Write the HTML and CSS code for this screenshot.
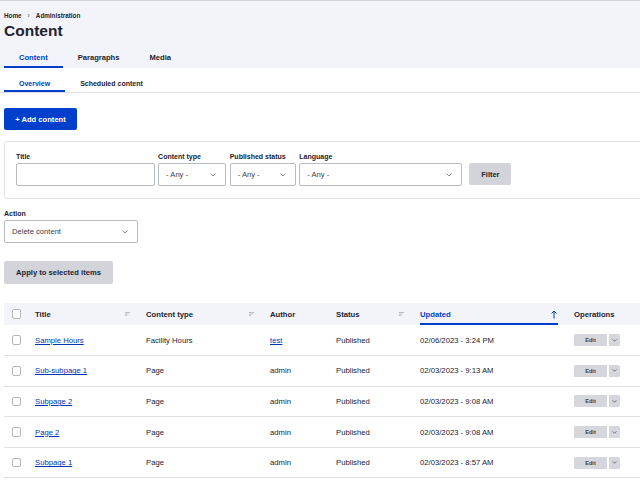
FILE: index.html
```html
<!DOCTYPE html>
<html lang="en">
<head>
<meta charset="utf-8">
<title>Content</title>
<link rel="stylesheet" href="styles.css">
</head>
<body>
<header class="page-header">
  <nav class="breadcrumb"><span>Home</span><span class="sep">›</span><span>Administration</span></nav>
  <h1 class="page-title">Content</h1>
  <ul class="tabs tabs-primary">
    <li class="tab active">Content</li>
    <li class="tab">Paragraphs</li>
    <li class="tab">Media</li>
  </ul>
</header>
<div class="subtabs">
  <ul class="tabs tabs-secondary">
    <li class="tab active">Overview</li>
    <li class="tab">Scheduled content</li>
  </ul>
</div>
<main class="content">
  <a class="btn btn-primary" href="#">+ Add content</a>

  <div class="filters">
    <div class="field f-title">
      <label>Title</label>
      <div class="input"></div>
    </div>
    <div class="field f-type">
      <label>Content type</label>
      <div class="input select"><span>- Any -</span><svg class="chev" viewBox="0 0 6 4" width="6" height="4"><polyline points="0.5,0.5 3,3 5.5,0.5"/></svg></div>
    </div>
    <div class="field f-status">
      <label>Published status</label>
      <div class="input select"><span>- Any -</span><svg class="chev" viewBox="0 0 6 4" width="6" height="4"><polyline points="0.5,0.5 3,3 5.5,0.5"/></svg></div>
    </div>
    <div class="field f-lang">
      <label>Language</label>
      <div class="input select"><span>- Any -</span><svg class="chev" viewBox="0 0 6 4" width="6" height="4"><polyline points="0.5,0.5 3,3 5.5,0.5"/></svg></div>
    </div>
    <button class="btn btn-filter">Filter</button>
  </div>

  <div class="field f-action">
    <label>Action</label>
    <div class="input select"><span>Delete content</span><svg class="chev" viewBox="0 0 6 4" width="6" height="4"><polyline points="0.5,0.5 3,3 5.5,0.5"/></svg></div>
  </div>

  <button class="btn btn-apply">Apply to selected items</button>

  <table class="views-table">
    <colgroup>
      <col class="c-chk"><col class="c-title"><col class="c-type"><col class="c-author"><col class="c-status"><col class="c-updated"><col class="c-ops">
    </colgroup>
    <thead>
      <tr>
        <th><div class="th-inner"><span class="cb"></span></div></th>
        <th><div class="th-inner"><span>Title</span><svg class="sort" viewBox="0 0 5 4" width="5" height="4"><path d="M0 0.5h5M0 2h3.6M0 3.5h2"/></svg></div></th>
        <th><div class="th-inner"><span>Content type</span><svg class="sort" viewBox="0 0 5 4" width="5" height="4"><path d="M0 0.5h5M0 2h3.6M0 3.5h2"/></svg></div></th>
        <th><div class="th-inner"><span>Author</span></div></th>
        <th><div class="th-inner"><span>Status</span><svg class="sort" viewBox="0 0 5 4" width="5" height="4"><path d="M0 0.5h5M0 2h3.6M0 3.5h2"/></svg></div></th>
        <th class="active"><div class="th-inner"><span>Updated</span><svg class="arrow" viewBox="0 0 6 9" width="6" height="9"><path d="M3 8.5V1M0.6 3.4L3 1l2.4 2.4"/></svg></div></th>
        <th><div class="th-inner"><span>Operations</span></div></th>
      </tr>
    </thead>
    <tbody>
      <tr>
        <td><span class="cb"></span></td>
        <td><a href="#">Sample Hours</a></td>
        <td>Facility Hours</td>
        <td><a href="#">test</a></td>
        <td>Published</td>
        <td>02/06/2023 - 3:24 PM</td>
        <td><div class="ops"><span class="op-edit">Edit</span><span class="op-toggle"><svg viewBox="0 0 6 4" width="5" height="3"><polyline points="0.5,0.5 3,3 5.5,0.5"/></svg></span></div></td>
      </tr>
      <tr>
        <td><span class="cb"></span></td>
        <td><a href="#">Sub-subpage 1</a></td>
        <td>Page</td>
        <td>admin</td>
        <td>Published</td>
        <td>02/03/2023 - 9:13 AM</td>
        <td><div class="ops"><span class="op-edit">Edit</span><span class="op-toggle"><svg viewBox="0 0 6 4" width="5" height="3"><polyline points="0.5,0.5 3,3 5.5,0.5"/></svg></span></div></td>
      </tr>
      <tr>
        <td><span class="cb"></span></td>
        <td><a href="#">Subpage 2</a></td>
        <td>Page</td>
        <td>admin</td>
        <td>Published</td>
        <td>02/03/2023 - 9:08 AM</td>
        <td><div class="ops"><span class="op-edit">Edit</span><span class="op-toggle"><svg viewBox="0 0 6 4" width="5" height="3"><polyline points="0.5,0.5 3,3 5.5,0.5"/></svg></span></div></td>
      </tr>
      <tr>
        <td><span class="cb"></span></td>
        <td><a href="#">Page 2</a></td>
        <td>Page</td>
        <td>admin</td>
        <td>Published</td>
        <td>02/03/2023 - 9:08 AM</td>
        <td><div class="ops"><span class="op-edit">Edit</span><span class="op-toggle"><svg viewBox="0 0 6 4" width="5" height="3"><polyline points="0.5,0.5 3,3 5.5,0.5"/></svg></span></div></td>
      </tr>
      <tr>
        <td><span class="cb"></span></td>
        <td><a href="#">Subpage 1</a></td>
        <td>Page</td>
        <td>admin</td>
        <td>Published</td>
        <td>02/03/2023 - 8:57 AM</td>
        <td><div class="ops"><span class="op-edit">Edit</span><span class="op-toggle"><svg viewBox="0 0 6 4" width="5" height="3"><polyline points="0.5,0.5 3,3 5.5,0.5"/></svg></span></div></td>
      </tr>
    </tbody>
  </table>
</main>
</body>
</html>
```
FILE: styles.css
```css
html, body {
  margin: 0;
  padding: 0;
  overflow: hidden;
  background: #fff;
}
body {
  font-family: "Liberation Sans", Arial, sans-serif;
  font-size: 7.6px;
  color: #222330;
  width: 640px;
}
ul { list-style: none; margin: 0; padding: 0; }

.page-header {
  background: #f3f4f9;
  border-top: 1px solid #d3d4d9;
  padding: 10px 4px 0;
}
.breadcrumb {
  display: flex;
  gap: 6px;
  font-size: 6.3px;
  font-weight: bold;
  line-height: 10px;
}
.breadcrumb .sep { font-weight: normal; font-size: 7px; color: #545560; }
.page-title {
  margin: 1px 0 0;
  font-size: 15.5px;
  line-height: 18px;
  font-weight: bold;
}
.tabs { display: flex; }
.tab {
  padding: 0 15px;
  font-weight: bold;
  color: #222330;
  border-bottom: 2px solid transparent;
}
.tab.active { color: #003ecc; border-bottom-color: #003ecc; }
.tabs-primary { margin-top: 7px; }
.tabs-primary .tab {
  font-size: 7.6px;
  line-height: 10px;
  padding-top: 6px;
  padding-bottom: 3px;
}
.subtabs {
  padding: 0 4px;
  border-bottom: 1px solid #dedfe4;
}
.tabs-secondary .tab {
  font-size: 7px;
  line-height: 10px;
  padding-top: 11px;
  padding-bottom: 1px;
}

.content { padding: 0 4px; }

.btn {
  display: inline-flex;
  align-items: center;
  justify-content: center;
  box-sizing: border-box;
  border: 0;
  border-radius: 2px;
  font-family: inherit;
  font-weight: bold;
  text-decoration: none;
  color: #222330;
  background: #d3d4d9;
}
.btn-primary {
  margin-top: 15px;
  width: 73px;
  height: 22px;
  background: #003ecc;
  color: #fff;
  font-size: 7.6px;
}

.filters {
  margin-top: 11px;
  width: 680px;
  box-sizing: border-box;
  border: 1px solid #e2e3e8;
  border-radius: 2px;
  padding: 10px 11px 12px;
  display: flex;
  align-items: flex-end;
  gap: 3.6px;
}
.field label {
  display: block;
  font-size: 7px;
  font-weight: bold;
  line-height: 9px;
  margin-bottom: 2px;
}
.input {
  box-sizing: border-box;
  height: 23px;
  border: 1px solid #b9bbc2;
  border-radius: 2px;
  background: #fff;
  display: flex;
  align-items: center;
  padding: 0 9px 0 7px;
  font-size: 7.6px;
  color: #3b3c48;
}
.select { justify-content: space-between; }
.chev { fill: none; stroke: #6b6d78; stroke-width: 0.8; }
.f-title .input { width: 138.5px; }
.f-type .input { width: 68px; }
.f-status .input { width: 66px; }
.f-lang .input { width: 162.5px; }
.btn-filter {
  margin-left: 4px;
  width: 42px;
  height: 22px;
  font-size: 7.4px;
  margin-bottom: 1px;
}

.f-action { margin-top: 10px; }
.f-action .input { width: 133.5px; }

.btn-apply {
  display: flex;
  margin-top: 18px;
  width: 109px;
  height: 23px;
  font-size: 7.6px;
}

.views-table {
  margin-top: 19px;
  width: 680px;
  border-collapse: collapse;
  table-layout: fixed;
}
.c-chk { width: 23px; }
.c-title { width: 111px; }
.c-type { width: 124px; }
.c-author { width: 66px; }
.c-status { width: 84px; }
.c-updated { width: 154px; }
.c-ops { width: 118px; }
.views-table th {
  background: #f3f4f9;
  padding: 0 8px;
  text-align: left;
  font-weight: bold;
  font-size: 7.7px;
}
.views-table th:first-child, .views-table td:first-child { padding: 0 0 0 7.5px; }
.th-inner {
  box-sizing: border-box;
  height: 22px;
  padding-top: 2px;
  border-bottom: 2px solid transparent;
  display: flex;
  align-items: center;
  justify-content: space-between;
}
.views-table th.active { color: #003ecc; }
.views-table th.active .th-inner { border-bottom-color: #003ecc; }
.sort { fill: none; stroke: #a4a6ae; stroke-width: 0.7; }
.arrow { fill: none; stroke: #003ecc; stroke-width: 1; margin-right: 1px; }
.views-table td {
  height: 30.6px;
  box-sizing: border-box;
  padding: 0 8px;
  border-bottom: 1px solid #dedfe4;
  font-size: 7.7px;
  vertical-align: middle;
  white-space: nowrap;
}
.views-table a { color: #0036b1; text-decoration: underline; }
.cb {
  display: block;
  box-sizing: border-box;
  width: 9.5px;
  height: 9.5px;
  border: 1px solid #b4b6bd;
  border-radius: 2px;
  background: #fff;
}
.ops { display: flex; gap: 1.5px; }
.op-edit, .op-toggle {
  height: 12px;
  background: #d6d7dc;
  display: flex;
  align-items: center;
  justify-content: center;
  font-size: 5.6px;
  font-weight: bold;
  color: #3b3c48;
}
.op-edit { width: 33px; border-radius: 1.5px 0 0 1.5px; }
.op-toggle { width: 11px; border-radius: 0 1.5px 1.5px 0; }
.op-toggle svg { fill: none; stroke: #3b3c48; stroke-width: 0.9; }
```
